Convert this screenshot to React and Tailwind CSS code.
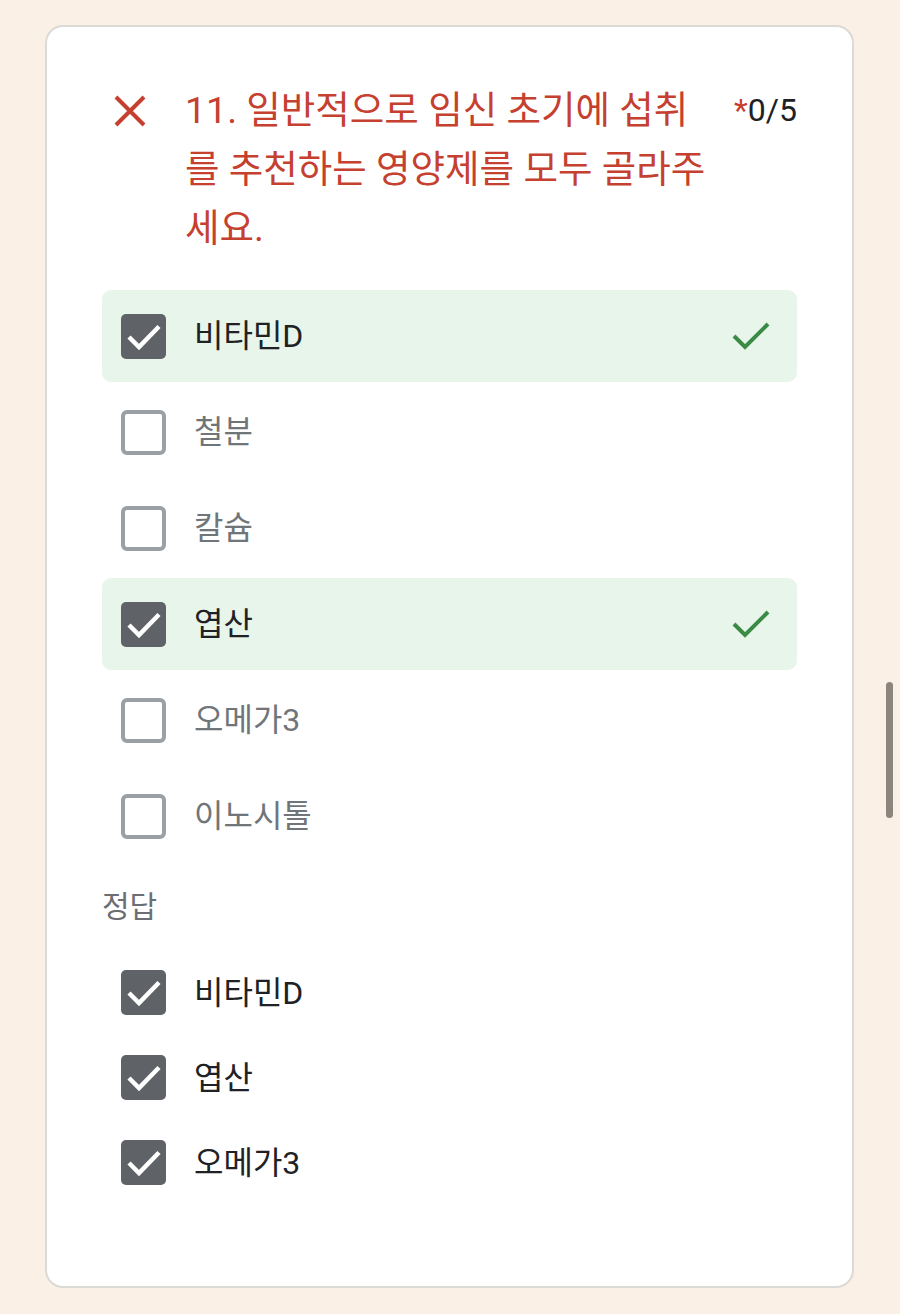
import React from 'react'

const options = [
  { label: '비타민D', checked: true, correct: true },
  { label: '철분', checked: false },
  { label: '칼슘', checked: false },
  { label: '엽산', checked: true, correct: true },
  { label: '오메가3', checked: false },
  { label: '이노시톨', checked: false },
]

const answers = ['비타민D', '엽산', '오메가3']

function CheckedBox() {
  return (
    <div className="w-[45px] h-[45px] rounded-[5px] bg-[#5f6368] shrink-0">
      <svg width="45" height="45" viewBox="0 0 45 45" fill="none">
        <path d="M8 23l10 10L38 12.5" stroke="#fff" strokeWidth="4.5" />
      </svg>
    </div>
  )
}

function EmptyBox() {
  return <div className="w-[45px] h-[45px] rounded-[6px] border-[4px] border-[#9aa0a6] bg-white shrink-0" />
}

function GreenCheck() {
  return (
    <svg width="44" height="34" viewBox="0 0 44 34" fill="none">
      <path d="M4 17l11 11L38 5" stroke="#3b8a46" strokeWidth="4" />
    </svg>
  )
}

export default function App() {
  return (
    <div
      className="min-h-[1314px] bg-[#faf0e6] pt-[25px] pl-[45px] relative"
      style={{ fontFamily: 'Roboto, "Noto Sans CJK KR", sans-serif' }}
    >
      <div className="w-[809px] h-[1263px] bg-white border-2 border-[#dcdad6] rounded-[18px] pt-[54px] px-[55px]">
        {/* Question header */}
        <div className="flex items-start">
          <div className="w-[83px] pl-[11px] pt-[13px] shrink-0">
            <svg width="34" height="34" viewBox="0 0 34 34" fill="none">
              <path d="M3 3l28 28M31 3L3 31" stroke="#c5402f" strokeWidth="4" />
            </svg>
          </div>
          <div className="flex-1 text-[37.5px] leading-[59px] text-[#c5402f]">
            11. 일반적으로 임신 초기에 섭취<br />
            를 추천하는 영양제를 모두 골라주<br />
            세요.
          </div>
          <div className="text-[32px] leading-[59px] text-[#202124] shrink-0">
            <span className="text-[#c5402f]">*</span>0/5
          </div>
        </div>

        {/* Options */}
        <div className="mt-[32px] flex flex-col gap-[4px]">
          {options.map((o) => (
            <div
              key={o.label}
              className={`h-[92px] flex items-center pl-[19px] pr-[23px] rounded-[9px] ${o.correct ? 'bg-[#e8f5ea]' : ''}`}
            >
              {o.checked ? <CheckedBox /> : <EmptyBox />}
              <span className={`ml-[28px] flex-1 text-[32px] ${o.checked ? 'text-[#202124]' : 'text-[#70757a]'}`}>
                {o.label}
              </span>
              {o.correct && <GreenCheck />}
            </div>
          ))}
        </div>

        {/* Correct answers */}
        <div className="mt-[25px] text-[30px] leading-[40px] text-[#6b6e72]">정답</div>
        <div className="mt-[23px] flex flex-col">
          {answers.map((a) => (
            <div key={a} className="h-[85px] flex items-center pl-[19px]">
              <CheckedBox />
              <span className="ml-[28px] text-[32px] text-[#202124]">{a}</span>
            </div>
          ))}
        </div>
      </div>

      {/* scrollbar thumb */}
      <div className="absolute left-[886px] top-[682px] w-[7px] h-[136px] rounded-full bg-[#8b857d]" />
    </div>
  )
}
